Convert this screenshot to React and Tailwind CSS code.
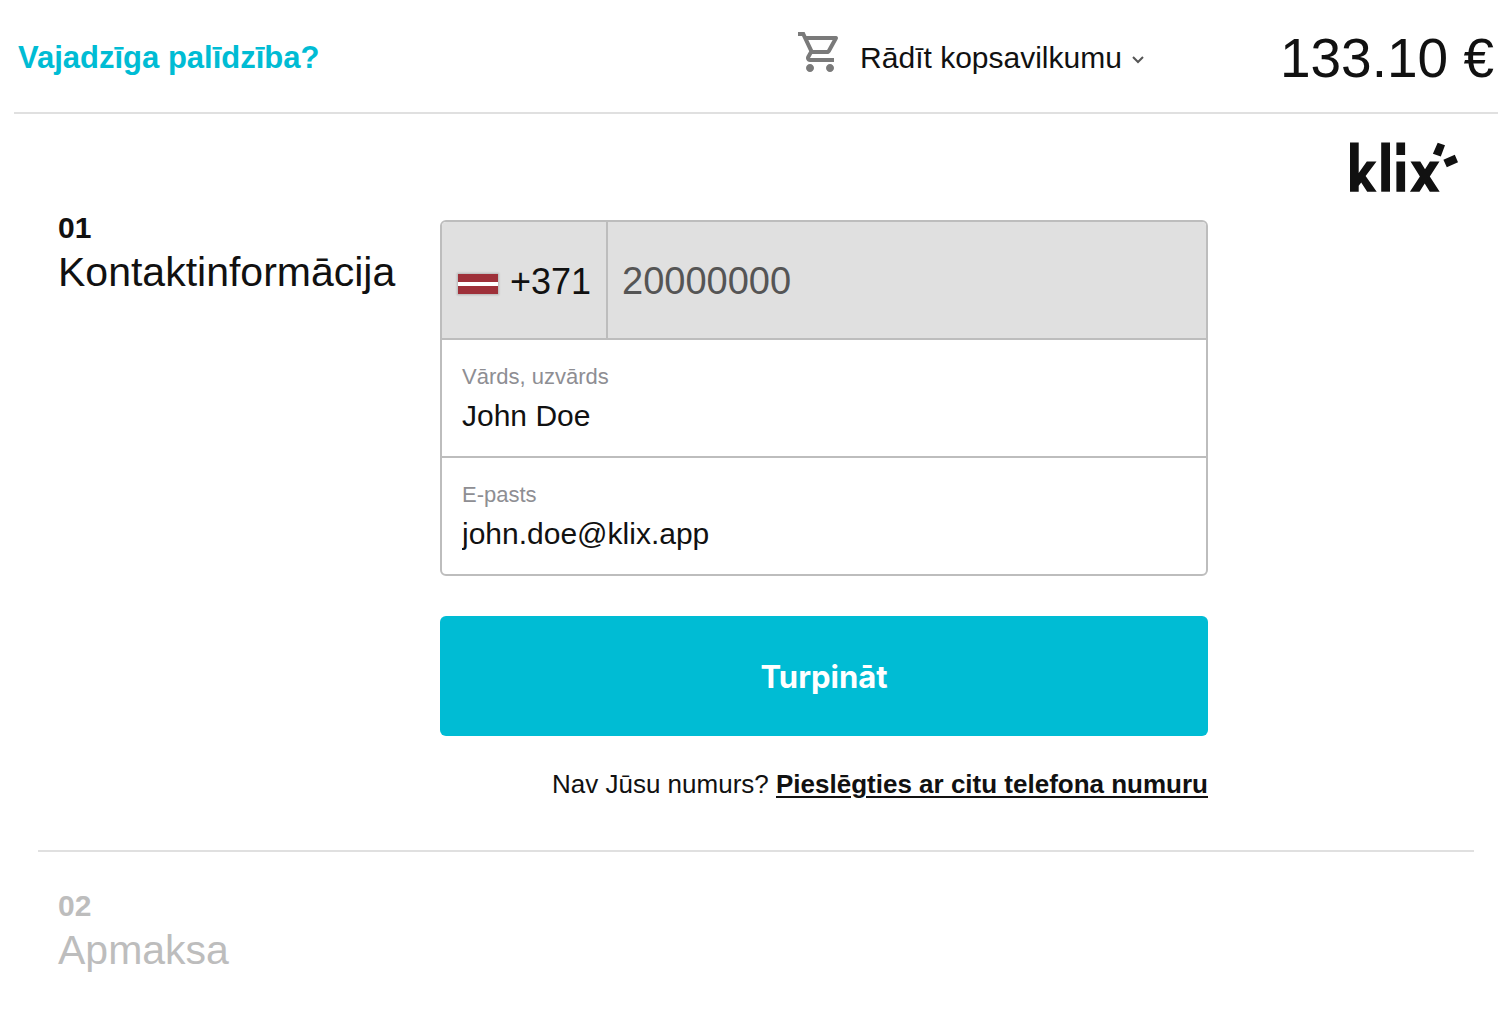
function CartIcon() {
  return (
    <svg viewBox="0 0 24 24" className="mb-3 h-12 w-12 shrink-0 fill-[#7a7a7a]" aria-hidden="true">
      <path d="M15.55 13c.75 0 1.41-.41 1.75-1.03l3.58-6.49c.37-.66-.11-1.48-.87-1.48H5.21l-.94-2H1v2h2l3.6 7.59-1.35 2.44C4.52 15.37 5.48 17 7 17h12v-2H7l1.1-2h7.45zM6.16 6h12.15l-2.76 5H8.53L6.16 6zM7 18c-1.1 0-1.99.9-1.99 2S5.9 22 7 22s2-.9 2-2-.9-2-2-2zm10 0c-1.1 0-1.99.9-1.99 2s.89 2 1.99 2 2-.9 2-2-.9-2-2-2z" />
    </svg>
  );
}

function KlixLogo() {
  return (
    <svg viewBox="0 0 108 50" className="h-[50px] w-[108px] fill-[#111]" role="img" aria-label="klix">
      <path d="M0 .5h8.700v30.500L16.800 19.500h9.700L15.600 34l11.100 15.700H17.200L11.200 40.500l-2.500 3.200v6H0z" />
      <path d="M31.200.500h8.800v49.200h-8.800z" />
      <path d="M46.400.500h8.700v12.500h-8.700zM46.400 19.500h8.700v30.200h-8.700z" />
      <path d="M60.500 19.500h9.800l4.700 7.800 4.900-7.800h9.600L79.800 34.400l9.900 15.300h-9.900l-5.100-8.300-5.200 8.300h-9.600l10-15.300z" />
      <path d="M87.700.700l7.300 2.600-4.200 11.200-7.900-2.800zM104.800 12.800l3.200 7.400-11.200 5-3.400-7.500z" />
    </svg>
  );
}

function LatvianFlag() {
  return (
    <svg viewBox="0 0 40 20" className="mt-1 h-5 w-10 shrink-0 shadow-[0_0_2px_1px_rgba(0,0,0,0.2)]" role="img" aria-label="Latvija">
      <path fill="#9e3039" d="M0 0h40v20H0z" />
      <path fill="#fff" d="M0 8h40v4H0z" />
    </svg>
  );
}

function StepTitle({ number, title }) {
  return (
    <h2 className="w-[382px] shrink-0 pl-5">
      <span className="block text-[30px] leading-9 font-bold">{number}</span>
      <span className="block text-[41px] leading-[52px]">{title}</span>
    </h2>
  );
}

function Field({ id, label, type, value }) {
  return (
    <div className="flex h-[118px] flex-col justify-center border-t-2 border-[#bdbdbd] px-5 pt-1">
      <label htmlFor={id} className="text-[22px] leading-8 text-[#8e8e93]">{label}</label>
      <input id={id} type={type} defaultValue={value} className="w-full bg-transparent text-[30px] leading-[46px] outline-none" />
    </div>
  );
}

export default function App() {
  return (
    <div className="min-h-screen bg-white font-['Liberation_Sans',Arial,sans-serif] text-[#111]">
      <header className="mr-3 ml-3.5 flex h-[114px] items-center border-b-2 border-[#e0e0e0] px-1 pt-1">
        <a href="#help" className="text-[31px] leading-9 font-bold text-[#00bcd4]">Vajadzīga palīdzība?</a>
        <button type="button" className="mr-[136px] ml-auto flex items-center text-[30px] leading-9">
          <CartIcon />
          <span className="ml-4">Rādīt kopsavilkumu</span>
          <svg viewBox="0 0 12 8" className="mt-1 ml-2.5 h-2 w-3 fill-none stroke-[#555] stroke-2" aria-hidden="true">
            <path d="M1 1l5 5 5-5" />
          </svg>
        </button>
        <p className="text-[55px] leading-none">133.10 €</p>
      </header>

      <main className="mx-9 pl-0.5">
        <div className="flex justify-end pt-7 pr-4">
          <KlixLogo />
        </div>

        <section className="flex items-start pt-[18px] pb-[46px]">
          <StepTitle number="01" title="Kontaktinformācija" />
          <form className="mt-2.5 ml-5 w-[768px]">
            <div className="overflow-hidden rounded-md border-2 border-[#bdbdbd]">
              <div className="flex h-[116px] bg-[#e0e0e0]">
                <div className="flex w-[166px] shrink-0 items-center gap-3 border-r-2 border-[#bdbdbd] pt-1 pl-4 text-[36px]">
                  <LatvianFlag />
                  <span>+371</span>
                </div>
                <input type="tel" aria-label="Telefona numurs" defaultValue="20000000" disabled className="min-w-0 flex-1 bg-transparent pt-0.5 pl-3.5 text-[38px] text-[#555]" />
              </div>
              <Field id="name" label="Vārds, uzvārds" type="text" value="John Doe" />
              <Field id="email" label="E-pasts" type="email" value="john.doe@klix.app" />
            </div>
            <button type="button" className="mt-10 h-[120px] w-full rounded-md bg-[#00bcd4] pt-0.5 font-[Inter,sans-serif] text-[31px] font-bold text-white">
              Turpināt
            </button>
            <p className="mt-[30px] mb-0.5 text-right text-[26px] leading-9">
              Nav Jūsu numurs?{' '}
              <a href="#other" className="font-bold underline decoration-2 underline-offset-3">Pieslēgties ar citu telefona numuru</a>
            </p>
          </form>
        </section>

        <section className="border-t-2 border-[#e0e0e0] pt-9 text-[#bdbdbd]">
          <StepTitle number="02" title="Apmaksa" />
        </section>
      </main>
    </div>
  );
}
